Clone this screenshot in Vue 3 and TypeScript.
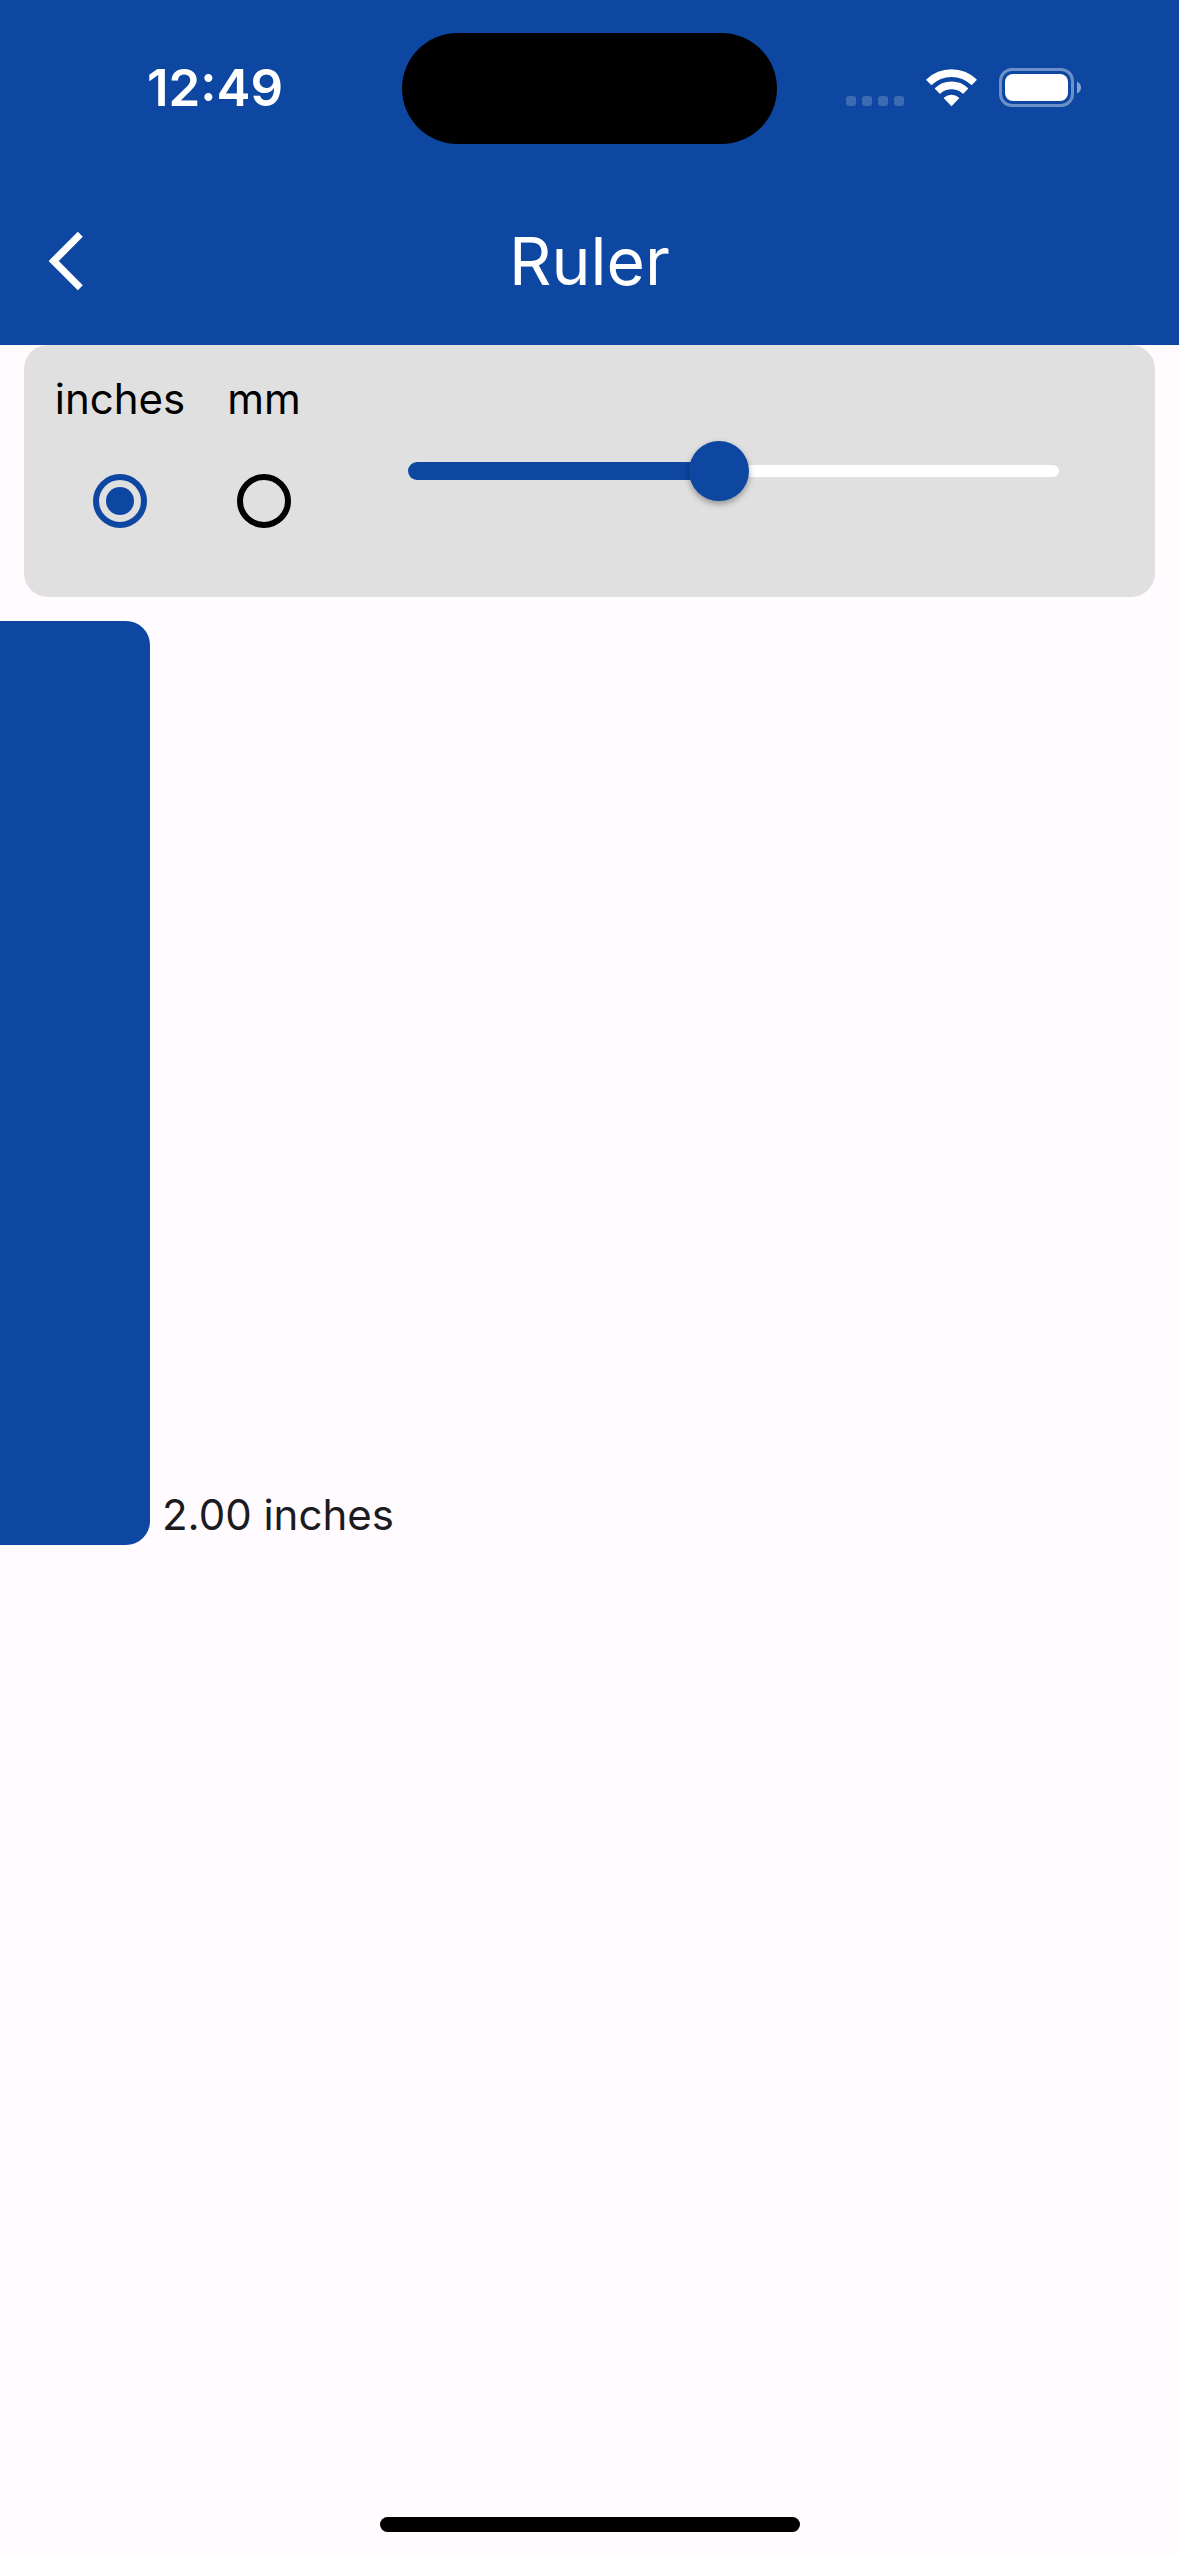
<script setup lang="ts">
import { computed, ref } from 'vue'

type Unit = 'inches' | 'mm'

const PIXELS_PER_INCH = 462
const MAX_INCHES = 4.19

const unit = ref<Unit>('inches')
const length = ref<number>(2)

const units: Unit[] = ['inches', 'mm']

const reading = computed(() => {
  const value = unit.value === 'inches' ? length.value : length.value * 25.4
  return `${value.toFixed(2)} ${unit.value}`
})
const filled = computed(() => `${(length.value / MAX_INCHES) * 100}%`)
const barHeight = computed(() => `${length.value * PIXELS_PER_INCH}px`)
</script>

<template>
  <div class="screen">
    <header class="header">
      <div class="status">
        <time class="clock">12:49</time>
        <div class="island"></div>
        <div class="indicators">
          <div class="signal" aria-hidden="true">
            <span v-for="n in 4" :key="n" class="signal-dot"></span>
          </div>
          <svg class="wifi" width="51" height="37" viewBox="0 0 51 37" aria-hidden="true">
            <path d="M1 10.8A35.4 35.4 0 0 1 50 10.8L45.6 15.2A29.3 29.3 0 0 0 5.4 15.2Z" />
            <path d="M9.6 19.6A23.2 23.2 0 0 1 41.4 19.6L37 24A17.4 17.4 0 0 0 14 24Z" />
            <path d="M18.6 29A10.8 10.8 0 0 1 32.4 29L25.5 36.3Z" />
          </svg>
          <svg width="82" height="39" viewBox="0 0 82 39" aria-hidden="true">
            <rect x="1.5" y="1.5" width="72" height="36" rx="11.5" fill="none" stroke="#fff" stroke-opacity=".4" stroke-width="3" />
            <rect x="6" y="6" width="63" height="27" rx="8" fill="#fff" />
            <path d="M78 13.5Q82 15.5 82 19.5T78 25.5Z" fill="#fff" fill-opacity=".5" />
          </svg>
        </div>
      </div>
      <nav class="appbar">
        <button class="back" type="button" aria-label="Back">
          <svg width="36" height="60" viewBox="0 0 36 60" aria-hidden="true">
            <path d="M.6 30L29.8.8L34.8 5.8L10.8 30L34.8 54.2L29.8 59.2Z" fill="#fff" />
          </svg>
        </button>
        <h1 class="title">Ruler</h1>
      </nav>
    </header>

    <main class="content">
      <section class="controls">
        <label v-for="option in units" :key="option" class="unit">
          <span class="unit-name">{{ option }}</span>
          <span class="radio-area">
            <input v-model="unit" class="radio" type="radio" name="unit" :value="option" />
          </span>
        </label>
        <div class="slider">
          <span class="track"></span>
          <span class="rail"><span class="track-filled" :style="{ width: filled }"></span></span>
          <input
            v-model.number="length"
            class="range"
            type="range"
            min="0"
            :max="MAX_INCHES"
            step="0.01"
            aria-label="Length"
          />
        </div>
      </section>

      <section class="measure">
        <div class="bar" :style="{ height: barHeight }"></div>
        <output class="reading">{{ reading }}</output>
      </section>
    </main>

    <footer class="footer"><div class="home"></div></footer>
  </div>
</template>

<style>
body {
  margin: 0;
  background: #fffbff;
}
</style>

<style scoped>
.screen {
  --blue: #0d47a1;
  display: flex;
  flex-direction: column;
  min-height: 100vh;
  background: #fffbff;
  color: #1c1b1f;
  font-family: Inter, 'Liberation Sans', sans-serif;
  font-size: 42px;
  line-height: 60px;
}

.header {
  background: var(--blue);
  color: #fff;
}

.status {
  display: grid;
  grid-template-columns: 1fr 375px 1fr;
  align-items: center;
  height: 177px;
}

.clock {
  padding: 0 0 2px 28px;
  text-align: center;
  font-size: 51px;
  font-weight: 600;
}

.island {
  height: 111px;
  border-radius: 56px;
  background: #000;
}

.indicators {
  display: flex;
  align-items: center;
  gap: 22px;
  padding: 0 0 2px 69px;
}

.signal {
  display: flex;
  align-items: flex-end;
  gap: 6px;
  height: 37px;
}

.signal-dot {
  width: 10px;
  height: 10px;
  border-radius: 3px;
  background: rgba(255, 255, 255, 0.2);
}

.wifi {
  fill: #fff;
  stroke: #fff;
  stroke-width: 1.4;
  stroke-linejoin: round;
}

.appbar {
  display: grid;
  grid-template-columns: 168px 1fr 168px;
  align-items: center;
  height: 168px;
}

.back {
  display: flex;
  align-items: center;
  height: 144px;
  padding: 0 48px;
  border: 0;
  background: none;
}

.title {
  margin: 0;
  text-align: center;
  font-size: 66px;
  line-height: 84px;
  font-weight: 400;
}

.content {
  flex: 1;
}

.controls {
  display: flex;
  margin: 0 24px;
  padding: 24px;
  border-radius: 24px;
  background: #e0e0e0;
  color: #000;
}

.unit {
  display: flex;
  flex-direction: column;
  align-items: center;
  width: 144px;
}

.radio-area {
  display: grid;
  place-items: center;
  height: 144px;
}

.radio {
  appearance: none;
  display: grid;
  place-items: center;
  box-sizing: border-box;
  width: 54px;
  height: 54px;
  margin: 0;
  border: 6px solid #000;
  border-radius: 50%;
}

.radio:checked {
  border-color: var(--blue);
}

.radio:checked::before {
  content: '';
  width: 28px;
  height: 28px;
  border-radius: 50%;
  background: var(--blue);
}

.slider {
  flex: 1;
  display: grid;
  align-items: center;
  padding: 0 42px;
}

.slider > * {
  grid-area: 1 / 1;
}

.track {
  height: 12px;
  margin: 0 30px;
  border-radius: 6px;
  background: #fff;
}

.rail {
  margin: 0 30px;
}

.track-filled {
  display: block;
  height: 18px;
  border-radius: 9px 0 0 9px;
  background: var(--blue);
}

.range {
  appearance: none;
  position: relative;
  width: 100%;
  height: 60px;
  margin: 0;
  background: transparent;
}

.range::-webkit-slider-thumb {
  appearance: none;
  width: 60px;
  height: 60px;
  border-radius: 50%;
  background: var(--blue);
  box-shadow: 0 3px 6px rgba(0, 0, 0, 0.35);
}

.measure {
  display: flex;
  align-items: flex-end;
  gap: 12px;
  margin-top: 24px;
}

.bar {
  width: 150px;
  border-radius: 0 24px 24px 0;
  background: var(--blue);
}

.footer {
  display: flex;
  justify-content: center;
  padding: 24px;
}

.home {
  width: 420px;
  height: 15px;
  border-radius: 8px;
  background: #000;
}
</style>
